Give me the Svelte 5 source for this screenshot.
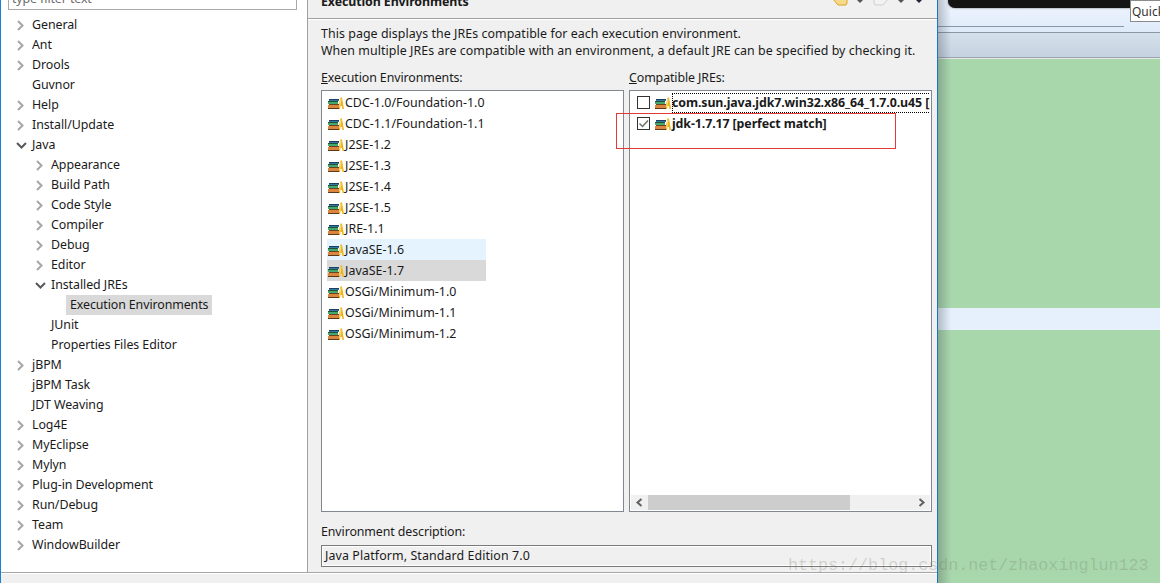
<script>
  const tree = [
    [0,'c','General'],[0,'c','Ant'],[0,'c','Drools'],[0,'','Guvnor'],[0,'c','Help'],[0,'c','Install/Update'],[0,'o','Java'],
    [1,'c','Appearance'],[1,'c','Build Path'],[1,'c','Code Style'],[1,'c','Compiler'],[1,'c','Debug'],[1,'c','Editor'],[1,'o','Installed JREs'],
    [2,'','Execution Environments'],[1,'','JUnit'],[1,'','Properties Files Editor'],
    [0,'c','jBPM'],[0,'','jBPM Task'],[0,'','JDT Weaving'],[0,'c','Log4E'],[0,'c','MyEclipse'],[0,'c','Mylyn'],[0,'c','Plug-in Development'],[0,'c','Run/Debug'],[0,'c','Team'],[0,'c','WindowBuilder']
  ];
  const envs = ['CDC-1.0/Foundation-1.0','CDC-1.1/Foundation-1.1','J2SE-1.2','J2SE-1.3','J2SE-1.4','J2SE-1.5','JRE-1.1','JavaSE-1.6','JavaSE-1.7','OSGi/Minimum-1.0','OSGi/Minimum-1.1','OSGi/Minimum-1.2'];
</script>

{#snippet jre()}
  <svg class="jre" width="16" height="16" viewBox="0 0 16 16">
    <path d="M12.5 2.5h1.5l2 11.5h-1.6l-.5-3h-1.4l-.5 3H10z" fill="#efb41a"/>
    <path d="M13 4l-1.4 8" stroke="#fbe38a" stroke-width="1" fill="none"/>
    <g shape-rendering="crispEdges">
      <path d="M1 4h10v1H1z" fill="#1c3f5e"/><path d="M1 5h10v1H1z" fill="#2f7aa6"/>
      <path d="M0 6h10v1H0z" fill="#234f3a"/><path d="M0 7h10v2H0z" fill="#45a86c"/>
      <path d="M1 9h10v1H1z" fill="#6a4522"/><path d="M0 10h11v3H0z" fill="#dc853f"/>
      <path d="M0 13h11v1H0z" fill="#5a3a1c"/>
    </g>
  </svg>
{/snippet}

<div class="page">
  <div class="window">
    <div class="body">
      <aside class="nav">
        <div class="filter"><span>type filter text</span></div>
        <ul class="tree">
          {#each tree as [lvl, tw, name]}
            <li class="row l{lvl}">
              <span class="twisty">
                {#if tw === 'c'}
                  <svg width="9" height="11" viewBox="0 0 9 11"><path d="M2 1l4.5 4.5L2 10" fill="none" stroke="#a6a6a6" stroke-width="2"/></svg>
                {:else if tw === 'o'}
                  <svg width="11" height="9" viewBox="0 0 11 9"><path d="M1 2l4.5 4.5L10 2" fill="none" stroke="#595959" stroke-width="2"/></svg>
                {/if}
              </span>
              <span class="name" class:sel={name === 'Execution Environments'}>{name}</span>
            </li>
          {/each}
        </ul>
      </aside>
      <main class="content">
        <header class="title">
          <h1>Execution Environments</h1>
          <div class="tools">
            <svg width="16" height="8" viewBox="0 0 16 8"><path d="M1 1l5 6h8l1-2V0H1z" fill="#f7d98a" stroke="#d9a520"/></svg>
            <i class="caret"></i>
            <svg class="next" width="16" height="8" viewBox="0 0 16 8"><path d="M15 1l-5 6H2L1 5V0h14z" fill="#f2f2f2" stroke="#cfcfcf"/></svg>
            <i class="caret"></i>
            <i class="caret dark"></i>
          </div>
        </header>
        <div class="form">
          <p class="desc">This page displays the JREs compatible for each execution environment.<br>When multiple JREs are compatible with an environment, a default JRE can be specified by checking it.</p>
          <div class="cols">
            <section class="col">
              <div class="label"><u>E</u>xecution Environments:</div>
              <ul class="box envs">
                {#each envs as e}
                  <li class="env" class:hover={e === 'JavaSE-1.6'} class:cur={e === 'JavaSE-1.7'}>{@render jre()}<span>{e}</span></li>
                {/each}
              </ul>
            </section>
            <section class="col">
              <div class="label"><u>C</u>ompatible JREs:</div>
              <div class="box jres">
                <div class="rows">
                  <div class="jrow">
                    <span class="check"></span>{@render jre()}<b class="focus">com.sun.java.jdk7.win32.x86_64_1.7.0.u45 [perfect match]</b>
                  </div>
                  <div class="jrow">
                    <span class="check"><svg width="13" height="13" viewBox="0 0 13 13"><path d="M2.5 6.5 5.5 9.5 11 3.5" fill="none" stroke="#6b6b6b" stroke-width="1.4"/></svg></span>{@render jre()}<b>jdk-1.7.17 [perfect match]</b>
                  </div>
                </div>
                <div class="hbar">
                  <svg width="9" height="9" viewBox="0 0 9 9"><path d="M6.5 1 2.5 4.5l4 3.5" fill="none" stroke="#606060" stroke-width="2"/></svg>
                  <div class="thumb"></div>
                  <svg class="right" width="9" height="9" viewBox="0 0 9 9"><path d="M2.5 1l4 3.5-4 3.5" fill="none" stroke="#606060" stroke-width="2"/></svg>
                </div>
              </div>
            </section>
          </div>
          <div class="envdesc">Environment description:</div>
          <div class="descbox">Java Platform, Standard Edition 7.0</div>
        </div>
      </main>
    </div>
    <div class="foot"></div>
  </div>

  <div class="backdrop">
    <div class="top">
      <div class="pill"></div>
      <div class="quick">Quick</div>
      <div class="rule"></div>
    </div>
    <div class="grad"></div>
    <div class="green"></div>
    <div class="band"></div>
    <div class="green fill"></div>
  </div>

  <div class="redbox"></div>
  <div class="mark">https://blog.csdn.net/zhaoxinglun123</div>
</div>

<style>
  :global(body) { margin: 0; background: #fff; }
  * { box-sizing: border-box; }
  .page { position: relative; display: flex; width: 1160px; height: 583px; overflow: hidden; font: 12.4px/20px "Noto Sans", "Noto Sans CJK SC", sans-serif; letter-spacing: -.1px; color: #1a1a1a; }
  ul { list-style: none; margin: 0; padding: 0; }
  .window { width: 938px; flex: none; display: flex; flex-direction: column; background: #f0f0f0; border-left: 1px solid #1a82d6; border-right: 1px solid #1a76c4; }
  .body { height: 573px; flex: none; display: flex; border-bottom: 1px solid #a6a6a6; }
  .nav { width: 307px; flex: none; background: #fff; border-right: 1px solid #a0a0a0; padding: 0 10px 0 7px; }
  .filter { height: 10px; border: 1px solid #a9a9a9; border-top: 0; width: 289px; position: relative; overflow: hidden; color: #6d6d6d; }
  .filter span { position: absolute; left: 3px; top: -11px; }
  .tree { margin-top: 5px; margin-left: -7px; letter-spacing: -.06px; }
  .row { height: 20px; display: flex; align-items: center; white-space: nowrap; }
  .twisty { width: 31px; flex: none; display: flex; align-items: center; padding-left: 15px; height: 20px; }
  .twisty svg { display: block; }
  .l1 { padding-left: 19px; }
  .l2 { padding-left: 38px; }
  .name { padding: 0 4px 0 0; height: 20px; }
  .name.sel { background: #d9d9d9; margin-left: -4px; padding: 0 4px; letter-spacing: -.1px; }
  .content { flex: 1; min-width: 0; display: flex; flex-direction: column; }
  .title { height: 19px; flex: none; border-bottom: 1px solid #a0a0a0; box-shadow: 0 1px 0 #fff; display: flex; justify-content: space-between; padding: 0 13px; }
  h1 { font-size: 12.4px; font-weight: 700; margin: -8px 0 0; line-height: 20px; height: 18px; }
  .tools { display: flex; align-items: flex-start; width: 92px; margin-top: -2px; }
  .next { margin-left: 10px; }
  .caret { width: 0; height: 0; border: 3px solid transparent; border-top-color: #555; border-bottom: 0; margin: 2px 0 0 9px; }
  .caret.dark { border-top-color: #223; margin-left: 12px; }
  .form { flex: 1; padding: 6px 5px 0 13px; display: flex; flex-direction: column; }
  .desc { margin: 0; line-height: 17px; white-space: nowrap; height: 34px; letter-spacing: .06px; }
  .cols { display: flex; gap: 5px; margin-top: 8px; }
  .col { width: 303px; }
  .label { height: 22px; line-height: 20px; margin-top: 1px; }
  .box { border: 1px solid #828790; background: #fff; height: 422px; display: block; overflow: hidden; }
  .envs { padding: 1px 5px 0; letter-spacing: .03px; }
  .env { height: 21px; display: flex; align-items: center; gap: 1px; width: 159px; white-space: nowrap; }
  .env.hover { background: #e5f3ff; }
  .env.cur { background: #d9d9d9; }
  .jre { flex: none; margin-left: 1px; }
  .jres { display: flex; flex-direction: column; padding: 1px 1px 1px; }
  .rows { flex: 1; overflow: hidden; }
  .jrow { height: 21px; display: flex; align-items: center; padding-left: 6px; white-space: nowrap; }
  .jrow b { font-weight: 700; margin-left: 1px; }
  .focus { outline: 1px dotted #000; outline-offset: -1px; }
  .check { width: 13px; height: 13px; flex: none; border: 1px solid #333; background: #fff; margin-right: 4px; display: block; position: relative; }
  .check svg { position: absolute; left: -1px; top: -1px; }
  .hbar { height: 15px; flex: none; background: #f0f0f0; display: flex; align-items: center; padding: 0 4px 0 4px; }
  .hbar svg { flex: none; }
  .thumb { width: 202px; height: 15px; background: #cdcdcd; margin-left: 4px; }
  .right { margin-left: auto; }
  .envdesc { margin-top: 10px; height: 22px; line-height: 20px; }
  .descbox { height: 22px; width: 611px; margin-top: 1px; border: 1px solid #7a7a7a; box-shadow: inset 0 0 0 1px #fff; padding: 0 3px; line-height: 20px; letter-spacing: .1px; }
  .foot { flex: 1; background: #f0f0f0; border-top: 1px solid #fff; }
  .backdrop { flex: 1; display: flex; flex-direction: column; position: relative; }
  .backdrop::after { content: ""; position: absolute; left: 0; top: 0; bottom: 0; width: 13px; background: linear-gradient(90deg, rgba(60,70,80,.3), rgba(60,70,80,0)); }
  .top { height: 33px; flex: none; position: relative; background: linear-gradient(#eef5fe, #dfeafa); border-bottom: 1px solid #8a97a5; }
  .pill { height: 8px; margin: 0 10px; background: #141414; border-radius: 0 0 7px 7px; box-shadow: 0 0 2px #555; }
  .quick { position: absolute; left: 192px; top: 0; width: 30px; height: 22px; background: #fff; border: 1px solid #8a8a8a; border-right: 0; padding: 3px 0 0 1px; line-height: 16px; overflow: hidden; color: #333; font-size: 12px; letter-spacing: 0; }
  .rule { position: absolute; left: 0; width: 186px; top: 26px; height: 1px; background: #8a97a5; }
  .grad { height: 25px; flex: none; background: linear-gradient(#d5e0ec, #c5d2df); border-bottom: 1px solid #9ba5af; }
  .green { height: 250px; flex: none; background: #a8d7ac; border-top: 1px solid #e6e6e6; }
  .band { height: 22px; flex: none; background: #e6f0fc; }
  .green.fill { flex: 1; height: auto; border-top: 0; }
  .redbox { position: absolute; left: 616px; top: 113px; width: 280px; height: 36px; border: 1px solid #e53935; }
  .mark { position: absolute; left: 788px; top: 554px; font: 16.7px/24px "Liberation Mono", monospace; letter-spacing: 0; color: rgba(110,110,90,.25); white-space: nowrap; pointer-events: none; }
</style>
